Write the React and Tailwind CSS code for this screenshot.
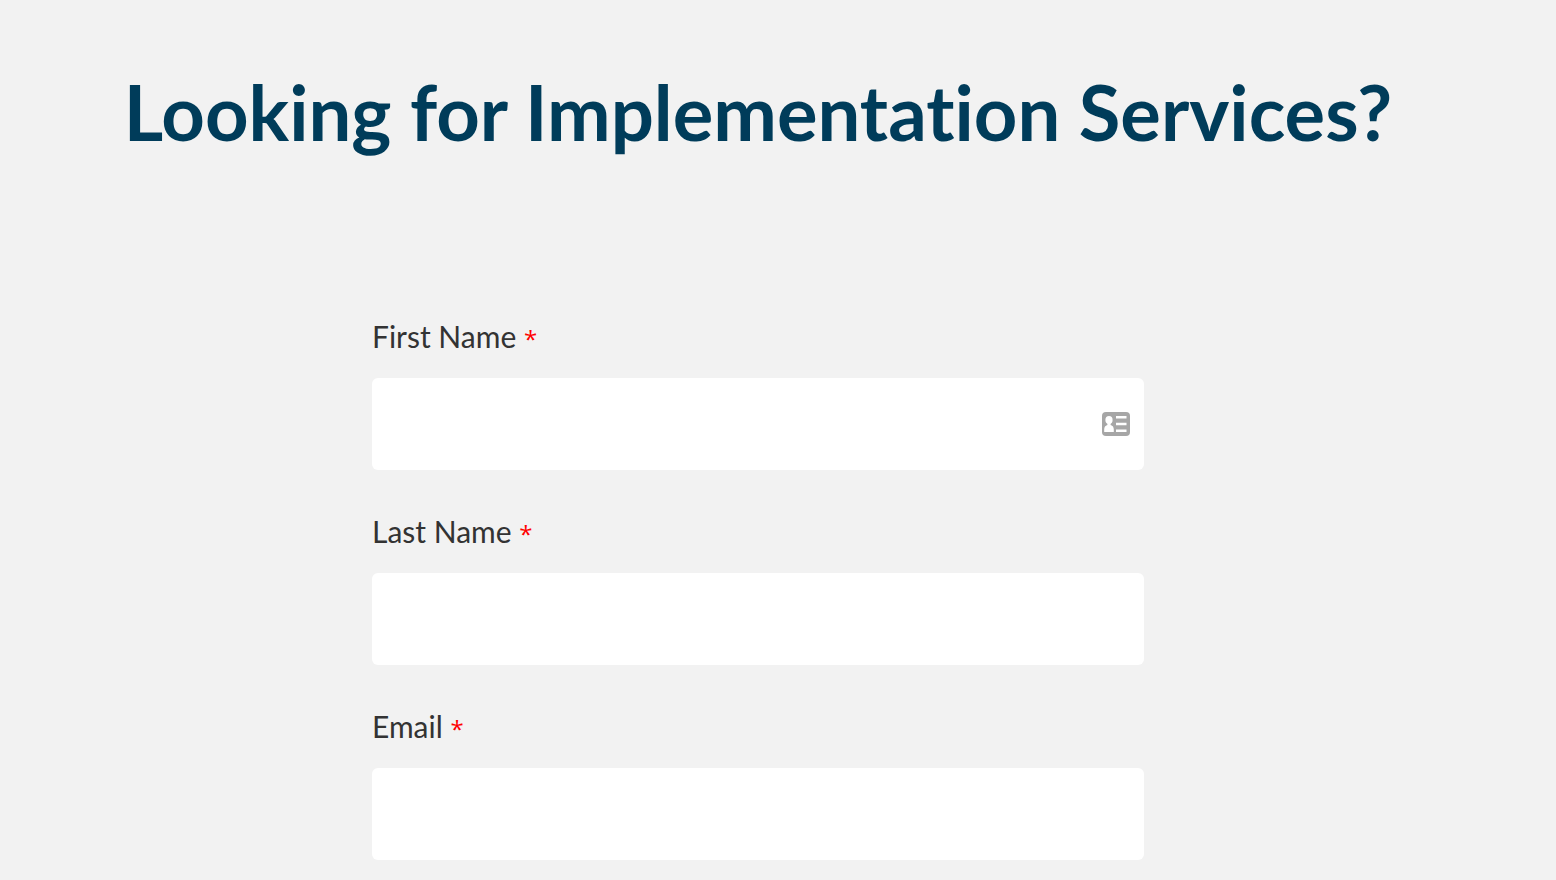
import React, { useState } from 'react';

const fields = [
    { text: 'First Name', register: 'firstName', type: 'text', hasContactIcon: true },
    { text: 'Last Name', register: 'lastName', type: 'text' },
    { text: 'Email', register: 'email', type: 'email' },
];

function ContactCardIcon(props) {
    return (
        <svg viewBox="0 0 28 24" aria-hidden="true" className={props.className}>
            <rect width="28" height="24" rx="4" fill="#a6a6a6" />
            <ellipse cx="7" cy="8" rx="3.6" ry="4" fill="#fff" />
            <path d="M5.4 10h3.2v3c2.2.6 3.2 2.2 3.2 4.6V20H2.2v-2.4c0-2.4 1-4 3.2-4.6z" fill="#fff" />
            <path d="M14 4h10.5v2.6H14zM14 10.7h10.5v2.6H14zM14 17.4h10.5V20H14z" fill="#fff" />
        </svg>
    );
}

function FormField({ item, value, onChange }) {
    return (
        <div>
            <label htmlFor={item.register} className="block text-[30px] leading-9 text-[#333333]">
                {item.text} <span className="font-['Open_Sans',sans-serif] text-[24px] leading-none text-[#ff0000]">*</span>
            </label>
            <div className="relative mt-6">
                <input
                    id={item.register}
                    name={item.register}
                    type={item.type}
                    required
                    value={value}
                    onChange={onChange}
                    className="block h-[92px] w-full rounded-md bg-white pl-6 pr-16 text-[30px] text-[#333333] focus:outline-none"
                />
                {item.hasContactIcon && (
                    <span className="pointer-events-none absolute inset-y-0 right-3.5 flex items-center">
                        <ContactCardIcon className="h-6 w-7" />
                    </span>
                )}
            </div>
        </div>
    );
}

function App() {
    const [values, setValues] = useState({ firstName: '', lastName: '', email: '' });

    const handleChange = (e) => {
        setValues({ ...values, [e.target.name]: e.target.value });
    };

    return (
        <main className="min-h-screen bg-[#f2f2f2] pt-[68px] pr-10 pb-5 font-['Lato',sans-serif]">
            <h1 className="text-center text-[76px] leading-[88px] font-bold text-[#003c5a] [font-variant-ligatures:none]">
                Looking for Implementation Services?
            </h1>
            <form className="mx-auto mt-[162px] flex max-w-[772px] flex-col gap-[43px]">
                {fields.map((item) => (
                    <FormField
                        key={item.register}
                        item={item}
                        value={values[item.register]}
                        onChange={handleChange}
                    />
                ))}
            </form>
        </main>
    );
}

export default App;
